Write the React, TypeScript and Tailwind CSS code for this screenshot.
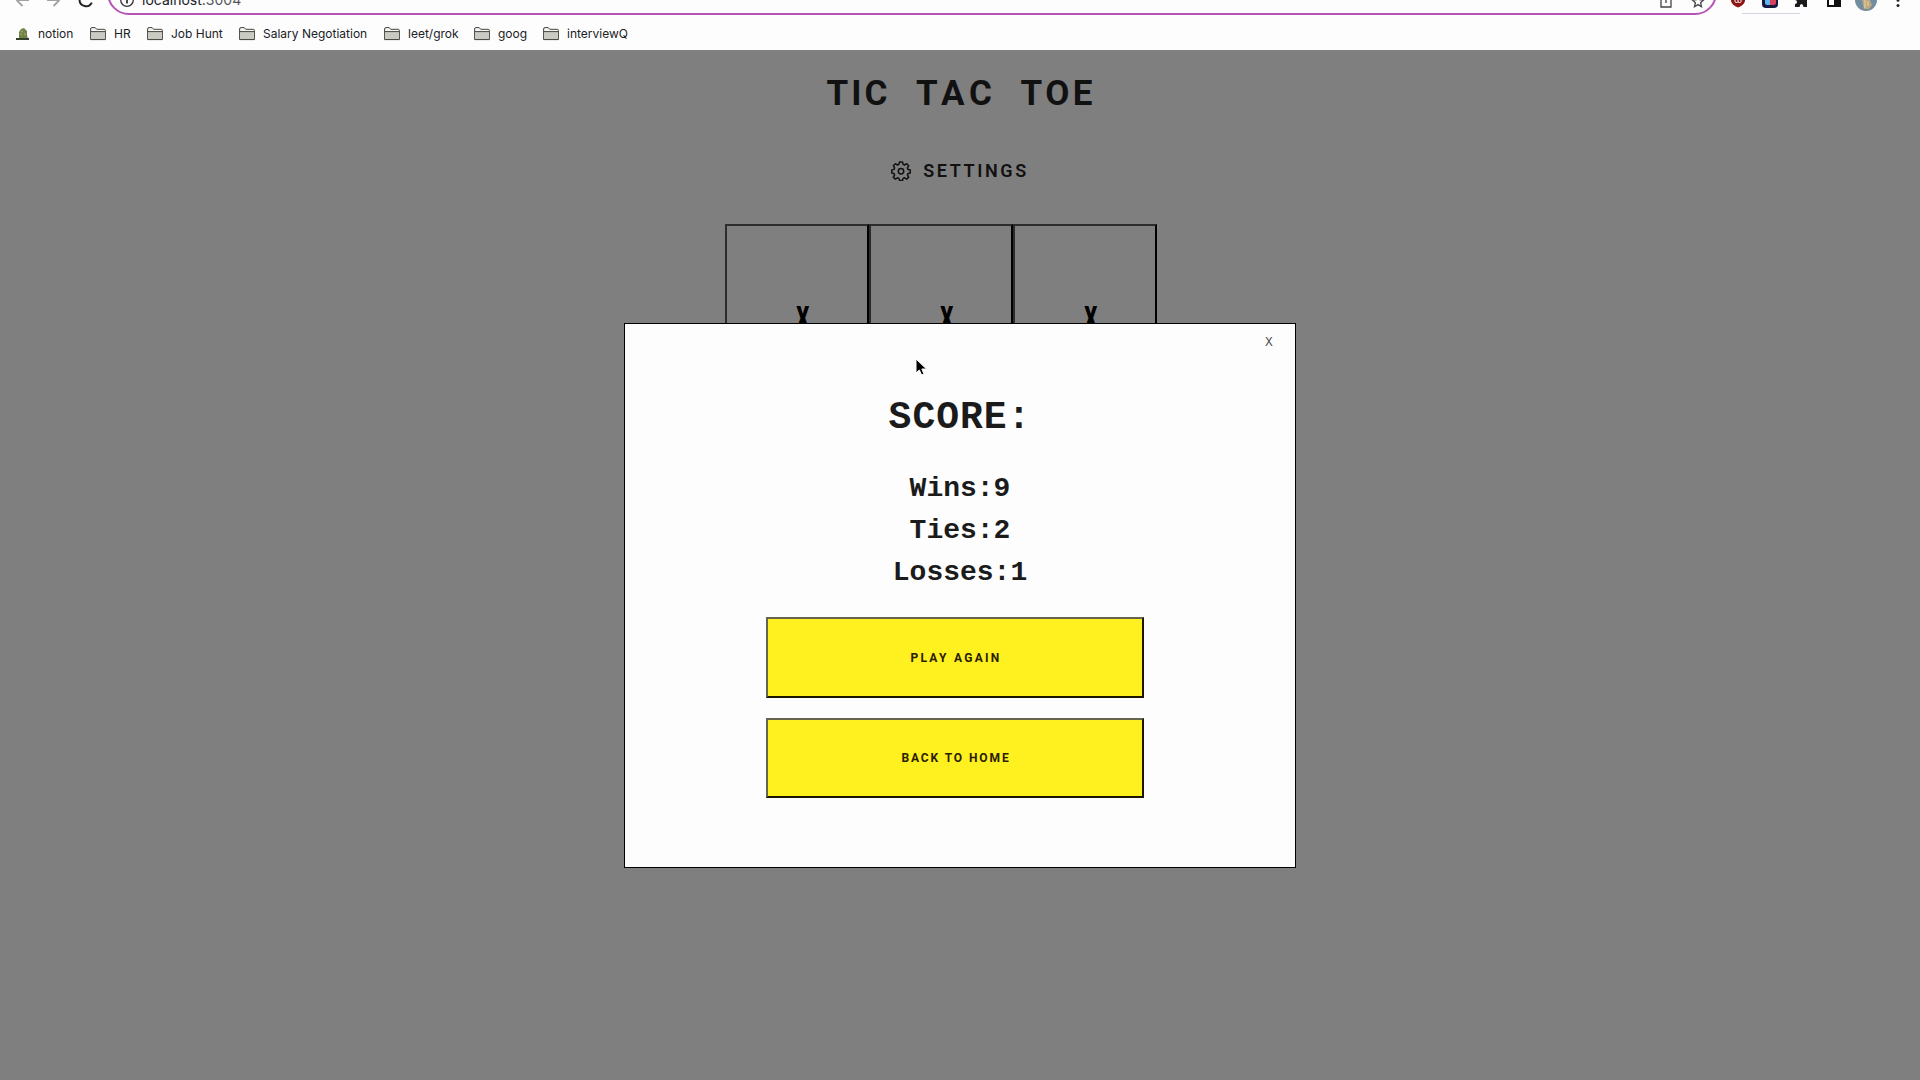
import React from "react";

const bookmarks = [
  { label: "HR", box: "w-[57px]" },
  { label: "Job Hunt", box: "w-[92px]" },
  { label: "Salary Negotiation", box: "w-[145px]" },
  { label: "leet/grok", box: "w-[90px]" },
  { label: "goog", box: "w-[69px]" },
  { label: "interviewQ", box: "w-[90px]" },
];

function Folder() {
  return (
    <svg width="16" height="14" viewBox="0 0 16 14" className="shrink-0">
      <path d="M.6 12.4V2Q.6.6 2 .6h3.2l1.5 1.7h7.5q1.2 0 1.2 1.2v8.9z" fill="#f4f4f2" stroke="#45453f" />
      <path d="M1 4.8h14v7.7H1z" fill="#c9cac2" />
      <path d="M.6 4.6h14.8M.6 12.6h14.8" stroke="#45453f" />
    </svg>
  );
}

function BrowserBar() {
  return (
    <header className="h-[50px] overflow-hidden bg-[#fdfdfe] font-['Inter',sans-serif] text-[#202124]">
      <div className="flex h-[15px] items-start">
        <svg width="107" height="15" viewBox="0 0 107 15" fill="none" strokeWidth="1.8">
          <path d="M29 0H17M22.500 6L16.500 0" stroke="#a2a2a2" />
          <path d="M47 0h12M53.500 6L59.500 0" stroke="#a2a2a2" />
          <path d="M79.500 0a6.500 6.500 0 0 0 12.300 2.600M92 0v-2" stroke="#222" strokeWidth="2" />
        </svg>
        <div className="-mt-[29px] flex h-[44px] w-[1610px] items-end rounded-[22px] border-2 border-[#b553b9] bg-[#fdfdfe] pl-[10px]">
          <svg width="16" height="16" viewBox="0 0 16 16" fill="none" stroke="#333" className="mb-[5px]">
            <circle cx="8" cy="8" r="6.300" strokeWidth="1.300" />
            <path d="M8 7v4.500" strokeWidth="1.800" />
          </svg>
          <span className="mb-[4px] ml-[7px] text-[14px] leading-[18px]">
            localhost:<span className="text-[#55565a]">3004</span>
          </span>
          <svg width="46" height="16" viewBox="0 0 46 16" fill="none" stroke="#444" strokeWidth="1.300" className="mb-[5px] ml-auto mr-[9px]">
            <path d="M3 5H1v10h10V5H9M6 11V3" />
            <path d="M38 4l1.600 3.600 4 .4-3 2.700.9 4-3.500-2.100-3.500 2.100.9-4-3-2.700 4-.4z" />
          </svg>
        </div>
        <svg width="203" height="15" viewBox="0 0 203 15">
          <path d="M25 13.500h58" stroke="#d5d3e3" />
          <path d="M14 0h14v1q-1 4-7 6.500Q15 5 14 1z" fill="#8c1515" />
          <path d="M18 0v1.500q0 1 1.500 1T21 1.500V0m0 1.500q0 1 1.500 1T24 1.500V0" stroke="#fff" fill="none" />
          <path d="M45 0h16v4q0 4-4 4h-8q-4 0-4-4z" fill="#141a40" />
          <path d="M48 0h5v5h-3q-2 0-2-2z" fill="#62b5ec" />
          <path d="M53 0h6v3q0 2-2 2h-4z" fill="#d9405a" />
          <path d="M81 0h9v7h-3.500q-.5-3-2-3t-2 3H78V4q2 0 2-2t-2-2z" fill="#1b1b1b" />
          <path d="M111 0v6h12V0" fill="none" stroke="#111" strokeWidth="2" />
          <path d="M117 0h7v7h-7z" fill="#111" />
          <path d="M138 0a11 11 0 0 0 22 0z" fill="#718ea0" />
          <path d="M145 0h8l2 5-3 4h-5z" fill="#c0a77c" />
          <path d="M148 0v8m3-7v5" stroke="#e8d6b0" />
          <circle cx="181" cy=".3" r="1.500" fill="#222" />
          <circle cx="181" cy="5.500" r="1.500" fill="#222" />
        </svg>
      </div>
      <nav className="flex h-[37px] items-start pl-[16px] pt-[11px] text-[12px] leading-[16px]">
        <div className="flex w-[74px] items-center">
          <svg width="13" height="14" viewBox="0 0 13 14" className="mr-[9px] shrink-0">
            <path d="M3 11V5l2-3 3-1 3 3v4l1 4H1z" fill="#718348" />
            <path d="M0 11h13v2H0z" fill="#33412b" />
            <path d="M5 4l2 1M4 7h2m2 0h2" stroke="#a8b36e" />
          </svg>
          <span className="whitespace-nowrap">notion</span>
        </div>
        {bookmarks.map((b) => (
          <div key={b.label} className={`flex shrink-0 items-center ${b.box}`}>
            <Folder />
            <span className="ml-[8px] whitespace-nowrap">{b.label}</span>
          </div>
        ))}
      </nav>
    </header>
  );
}

function Cell() {
  return (
    <div className="flex h-[144px] w-[144px] justify-center border-2 border-b-black border-l-[#2c2c2c] border-r-black border-t-[#2c2c2c] pl-[12px] pt-[74px]">
      <span className="h-[36px] scale-x-[0.6] text-[34px] font-black leading-[36px] text-black">X</span>
    </div>
  );
}

function ActionButton({ label, size }: { label: string; size: string }) {
  return (
    <button
      className={`flex w-[378px] items-center justify-center border-2 border-b-[#1c1600] border-l-[#66644f] border-r-[#1c1600] border-t-[#66644f] bg-[#fff01f] font-['Roboto',sans-serif] text-[12px] font-bold text-[#2a2000] ${size}`}
    >
      {label}
    </button>
  );
}

export default function App() {
  return (
    <div className="relative h-[1080px] w-[1920px] overflow-hidden bg-[#7f7f7f] text-[#111]">
      <BrowserBar />
      <main className="flex flex-col items-center font-['Roboto',sans-serif]">
        <h1 className="mt-[23px] flex h-[42px] w-[267px] whitespace-nowrap text-[35px] font-bold leading-[42px]">
          <span className="w-[90px] tracking-[3px]">TIC</span>
          <span className="w-[105px] tracking-[5px]">TAC</span>
          <span className="w-[73px] tracking-[3.500px]">TOE</span>
        </h1>
        <div className="mt-[44px] flex h-[24px] items-center">
          <svg width="20" height="20" viewBox="0 0 20 20" fill="none" stroke="#111" strokeWidth="1.500" strokeLinejoin="round">
            <path d="M8.500 1h3l.6 2.400 1.400.6 2.200-1.300 2 2-1.300 2.200.6 1.500 2.300.6v3l-2.300.5-.6 1.500 1.300 2.100-2 2-2.200-1.300-1.400.6-.6 2.200h-3l-.6-2.200-1.400-.6-2.200 1.300-2-2L3.600 14 3 12.500.8 12V9L3 8.400l.6-1.500-1.300-2.200 2-2L6.500 4l1.400-.6z" />
            <circle cx="10" cy="10.300" r="2.700" />
          </svg>
          <span className="ml-[12px] text-[18px] font-semibold leading-[24px] tracking-[2.600px]">SETTINGS</span>
        </div>
        <div className="mr-[38px] mt-[41px] flex">
          <Cell />
          <Cell />
          <Cell />
        </div>
      </main>
      <section className="absolute left-[624px] top-[323px] flex h-[545px] w-[672px] flex-col items-center border border-black bg-[#fdfdfe] font-['Courier_New','Liberation_Mono',monospace] text-[#1b1b1b]">
        <button className="ml-[618px] mt-[9px] h-[20px] text-[13px] leading-[20px] text-[#555]">X</button>
        <h2 className="mt-[41px] h-[48px] text-[38px] font-bold leading-[48px] tracking-[1px]">SCORE:</h2>
        <div className="mt-[26px] text-center text-[28px] font-bold leading-[42px]">
          <p>Wins:9</p>
          <p>Ties:2</p>
          <p>Losses:1</p>
        </div>
        <div className="mr-[10px] mt-[23px] flex flex-col gap-[20px]">
          <ActionButton label="PLAY AGAIN" size="h-[81px] pl-[2px] tracking-[2.300px]" />
          <ActionButton label="BACK TO HOME" size="h-[80px] pl-[2px] tracking-[1.900px]" />
        </div>
      </section>
      <svg width="14" height="20" viewBox="0 0 14 20" className="absolute left-[915px] top-[358px]">
        <path d="M1 1v14l3.400-3 2.200 5 2.400-1-2.200-5h4.700z" fill="#000" stroke="#fff" />
      </svg>
    </div>
  );
}
